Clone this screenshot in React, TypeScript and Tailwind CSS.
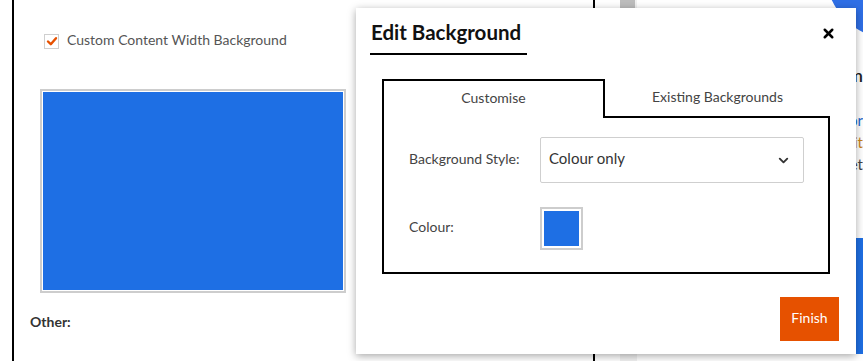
import { ChevronDown, X } from 'lucide-react'

const font = { fontFamily: 'Lato, "Noto Sans", sans-serif' }

function Check() {
  return (
    <span className="flex h-[15px] w-[15px] items-center justify-center border border-[#cfcfcf] bg-white">
      <svg width="12" height="12" viewBox="0 0 12 12">
        <path d="M2 6.5 L4.8 9.2 L10 3.2" fill="none" stroke="#e65100" strokeWidth="2.4" strokeLinecap="round" strokeLinejoin="round" />
      </svg>
    </span>
  )
}

function EditBackgroundModal() {
  return (
    <div className="absolute left-[356px] top-[8px] flex h-[346px] w-[500px] flex-col bg-white shadow-[0_2px_8px_rgba(0,0,0,0.35)]">
      <div className="flex items-start justify-between pl-[14px] pr-[20px] pt-[11px]">
        <span className="border-b-2 border-black pb-[7px] pl-[1px] pr-[6px] text-[20.5px] font-bold leading-[27px] text-[#111]">
          Edit Background
        </span>
        <X size={15} strokeWidth={4} className="mt-[7px] text-black" />
      </div>

      <div className="ml-[26px] mt-[24px] w-[448px]">
        <div className="flex text-[14px] text-[#444]">
          <div className="relative z-10 -mb-[2px] flex h-[39px] w-[223px] items-center justify-center border-2 border-b-0 border-black bg-white pb-[5px]">
            Customise
          </div>
          <div className="flex h-[37px] flex-1 items-center justify-center pb-[3px]">Existing Backgrounds</div>
        </div>
        <div className="flex flex-col gap-[24px] border-2 border-black pb-[22px] pl-[25px] pr-[24px] pt-[19px] text-[14px] text-[#444]">
          <div className="flex items-center">
            <span className="w-[131px] pb-[4px]">Background Style:</span>
            <div className="flex h-[46px] flex-1 items-center justify-between rounded-[2px] border border-[#cfcfcf] pl-[8px] pr-[12px] text-[15px] text-[#333]">
              <span className="pb-[3px]">Colour only</span>
              <ChevronDown size={15} strokeWidth={3} className="text-[#333]" />
            </div>
          </div>
          <div className="flex items-center">
            <span className="w-[131px] pb-[4px]">Colour:</span>
            <div className="h-[43px] w-[43px] border-2 border-[#cdcdcd] bg-white p-[2px]">
              <div className="h-full w-full bg-[#1e6fe4]" />
            </div>
          </div>
        </div>
      </div>

      <div className="mt-[23px] flex justify-end pr-[17px]">
        <button className="h-[44px] w-[59px] bg-[#e65100] pb-[4px] text-[14px] text-white">Finish</button>
      </div>
    </div>
  )
}

export default function App() {
  return (
    <div className="relative h-[361px] w-[863px] overflow-hidden bg-white" style={font}>
      <div className="flex h-full">
        {/* editor column */}
        <div className="ml-[12px] flex h-full w-[583px] flex-col border-x-2 border-black pl-[16px]">
          <label className="mt-[29px] flex items-center gap-[8px] pl-[14px] text-[14px] text-[#555]">
            <Check />
            <span className="pb-[3px]">Custom Content Width Background</span>
          </label>
          <div className="ml-[10px] mt-[36px] h-[204px] w-[306px] border-2 border-[#cdcdcd] bg-white p-[1px]">
            <div className="h-full w-full bg-[#1e6fe4]" />
          </div>
          <div className="mt-[18px] text-[14px] font-bold text-[#333]">Other:</div>
        </div>

        {/* scrollbar */}
        <div className="ml-[25px] flex h-full w-[17px] flex-col bg-[#f1f1f1]">
          <div className="h-[40px] w-[15px] bg-[#bdbdbd]" />
        </div>

        {/* preview column */}
        <div className="relative flex h-full flex-1 flex-col overflow-hidden">
          <div className="absolute -right-[102px] -top-[100px] h-[140px] w-[140px] rounded-full bg-[#2f6fe6]" />
          <div className="mt-[62px] whitespace-nowrap text-right text-[18px] font-semibold text-[#222]">Lorem</div>
          <div className="mt-[22px] flex flex-col gap-[4px] text-right text-[15px] leading-[18px]">
            <span className="text-[#2266cc]">dolor</span>
            <span className="text-[#c9851a]">sit</span>
            <span className="text-[#444]">amet</span>
          </div>
          <div className="mt-[65px] h-[102px] bg-[#1e6fe4]" />
          <div className="whitespace-nowrap bg-[#1e6fe4] text-[15px] leading-[14px] text-white">desent ut sapien</div>
        </div>
      </div>

      <EditBackgroundModal />
    </div>
  )
}
